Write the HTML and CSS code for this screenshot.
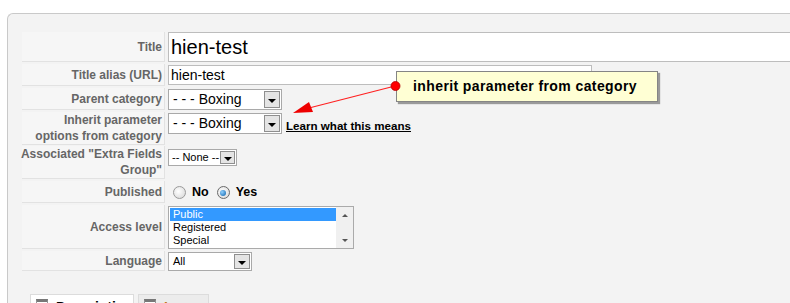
FILE: index.html
```html
<!DOCTYPE html>
<html lang="en">
<head>
  <meta charset="UTF-8" />
  <meta name="viewport" content="width=device-width, initial-scale=1.0" />
  <title>Category - Edit</title>
  <link rel="stylesheet" href="styles.css">
</head>
<body>
  <div class="panel">
    <div class="form">
      <div class="row row-title">
        <div class="label">Title</div>
        <div class="field"><input class="input-title" type="text" value="hien-test"></div>
      </div>

      <div class="row row-alias">
        <div class="label">Title alias (URL)</div>
        <div class="field"><input class="input-alias" type="text" value="hien-test"></div>
      </div>

      <div class="row row-parent">
        <div class="label">Parent category</div>
        <div class="field">
          <div class="select select-cat"><span class="value">- - - Boxing</span><span class="arrow"></span></div>
        </div>
      </div>

      <div class="row row-inherit">
        <div class="label">Inherit parameter<br>options from category</div>
        <div class="field">
          <div class="select select-cat"><span class="value">- - - Boxing</span><span class="arrow"></span></div>
          <a class="help" href="#">Learn what this means</a>
        </div>
      </div>

      <div class="row row-extra">
        <div class="label">Associated "Extra Fields<br>Group"</div>
        <div class="field">
          <div class="select select-small"><span class="value">-- None --</span><span class="arrow"></span></div>
        </div>
      </div>

      <div class="row row-published">
        <div class="label">Published</div>
        <div class="field">
          <label class="radio"><span class="dot"></span>No</label>
          <label class="radio"><span class="dot checked"></span>Yes</label>
        </div>
      </div>

      <div class="row row-access">
        <div class="label">Access level</div>
        <div class="field">
          <div class="listbox">
            <ul>
              <li class="selected">Public</li>
              <li>Registered</li>
              <li>Special</li>
            </ul>
            <div class="scrollbar"><span class="up"></span><span class="down"></span></div>
          </div>
        </div>
      </div>

      <div class="row row-lang">
        <div class="label">Language</div>
        <div class="field">
          <div class="select select-lang"><span class="value">All</span><span class="arrow"></span></div>
        </div>
      </div>
    </div>

    <div class="tabs">
      <div class="tab active"><span class="tab-icon"></span>Description</div>
      <div class="tab"><span class="tab-icon"></span>Image</div>
    </div>
  </div>

  <div class="callout">inherit parameter from category</div>

  <svg class="pointer" width="790" height="303" viewBox="0 0 790 303">
    <line x1="395" y1="86" x2="309" y2="108" stroke="#ff2020" stroke-width="1.2" />
    <polygon points="293,113 309,102 313,112" fill="#ee0000" />
    <circle cx="395.5" cy="86" r="4.5" fill="#ff0000" stroke="#b00000" stroke-width="0.8" />
  </svg>
</body>
</html>
```

FILE: styles.css
```css
body {
  margin: 0;
  background: #fff;
  font-family: "Liberation Sans", Arial, sans-serif;
  overflow: hidden;
  height: 303px;
  position: relative;
}

.panel {
  margin: 13px 0 0 7px;
  height: 320px;
  background: #f3f3f3;
  border: 1px solid #c9c9c9;
  border-right: none;
  border-radius: 6px 0 0 0;
  padding: 18px 0 0 14px;
}

.form {
  display: flex;
  flex-direction: column;
  gap: 2px;
}

.row {
  display: grid;
  grid-template-columns: 143px 1fr;
  column-gap: 3px;
}

.label {
  box-sizing: border-box;
  background: #f6f6f6;
  border-bottom: 1px solid #e2e2e2;
  border-right: 1px solid #e2e2e2;
  padding: 0 2px 0 0;
  display: flex;
  align-items: center;
  justify-content: flex-end;
  text-align: right;
  white-space: nowrap;
  font-size: 12px;
  font-weight: bold;
  line-height: 16px;
  color: #666;
}

.field {
  display: flex;
  align-items: flex-start;
  padding-top: 1px;
}

.row-title { height: 30px; }
.row-alias { height: 22px; }
.row-parent { height: 22px; }
.row-inherit { height: 32px; }
.row-extra { height: 33px; }
.row-published { height: 22px; }
.row-access { height: 44px; }
.row-lang { height: 20px; }

.row-title .field { padding-top: 0; }
.row-extra .field { padding-top: 3px; }
.row-published .field { padding-top: 4px; }
.row-lang .field { padding-top: 1px; }

input {
  box-sizing: border-box;
  border: 1px solid #bdbdbd;
  background: #fff;
  font-family: "Liberation Sans", Arial, sans-serif;
  color: #000;
  margin: 0;
  outline: none;
}

.input-title {
  width: 660px;
  height: 30px;
  font-size: 20px;
  padding: 0 2px;
}

.input-alias {
  width: 424px;
  height: 20px;
  font-size: 14px;
  padding: 0 2px;
}

/* dropdowns */
.select {
  box-sizing: border-box;
  display: flex;
  align-items: stretch;
  background: #fff;
  border: 1px solid #a9a9a9;
  color: #000;
  padding: 1px;
}

.select .value {
  flex: 1;
  padding-left: 3px;
  white-space: nowrap;
  overflow: hidden;
}

.select .arrow {
  box-sizing: border-box;
  width: 16px;
  background: #e4e4e4;
  border: 1px solid #8e8e8e;
  display: flex;
  align-items: center;
  justify-content: center;
}

.select .arrow::after {
  content: "";
  border-top: 4px solid #000;
  border-left: 4px solid transparent;
  border-right: 4px solid transparent;
  margin-top: 2px;
}

.select-cat {
  width: 114px;
  height: 21px;
  font-size: 14px;
  line-height: 17px;
}

.select-small {
  width: 69px;
  height: 17px;
  font-size: 11px;
  line-height: 13px;
}

.select-small .value { padding-left: 2px; }
.select-small .arrow { width: 15px; }

.select-lang {
  width: 84px;
  height: 19px;
  font-size: 11px;
  line-height: 15px;
}

.help {
  margin: 6px 0 0 4px;
  font-size: 11.6px;
  font-weight: bold;
  color: #000;
  text-decoration: underline;
}

/* radios */
.radio {
  display: flex;
  align-items: center;
  font-size: 12.5px;
  font-weight: bold;
  color: #000;
  margin-left: 5px;
  margin-right: 3px;
  line-height: 15px;
}

.dot {
  box-sizing: border-box;
  width: 13px;
  height: 13px;
  border-radius: 50%;
  border: 1px solid #9a9a9a;
  background: radial-gradient(circle at 40% 40%, #fff, #d4d4d4);
  margin-right: 6px;
  display: flex;
  align-items: center;
  justify-content: center;
}

.dot.checked {
  border-color: #6a6a6a;
}

.dot.checked::after {
  content: "";
  width: 6px;
  height: 6px;
  border-radius: 50%;
  background: radial-gradient(circle at 35% 35%, #8fd0ff, #0a5fa8);
}

/* access list */
.listbox {
  box-sizing: border-box;
  width: 186px;
  height: 43px;
  border: 1px solid #aaa;
  background: #fff;
  display: flex;
  padding: 1px 0 0 1px;
}

.listbox ul {
  flex: 1;
  list-style: none;
  margin: 0;
  padding: 0;
  font-size: 11px;
  line-height: 13px;
}

.listbox li {
  padding-left: 3px;
  color: #000;
}

.listbox li.selected {
  background: #3399ff;
  color: #fff;
}

.scrollbar {
  width: 17px;
  margin-top: -1px;
  background: #f0f0f0;
  display: flex;
  flex-direction: column;
  justify-content: space-between;
  align-items: center;
  padding: 7px 0 6px;
  box-sizing: border-box;
}

.scrollbar .up {
  border-bottom: 3px solid #555;
  border-left: 3px solid transparent;
  border-right: 3px solid transparent;
}

.scrollbar .down {
  border-top: 3px solid #555;
  border-left: 3px solid transparent;
  border-right: 3px solid transparent;
}

/* tabs */
.tabs {
  display: flex;
  gap: 4px;
  margin: 23px 0 0 8px;
}

.tab {
  box-sizing: border-box;
  height: 30px;
  border: 1px solid #dcdcdc;
  background: #ececec;
  display: flex;
  align-items: flex-start;
  padding: 4px 0 0 5px;
  font-size: 14px;
  font-weight: bold;
  line-height: 16px;
  color: #c47a1e;
  width: 71px;
}

.tab.active {
  background: #fff;
  color: #000;
  width: 104px;
}

.tab-icon {
  width: 10px;
  height: 10px;
  border: 1px solid #999;
  border-top: 3px solid #777;
  background: #fff;
  margin: 0 8px 0 0;
}

/* callout over the form */
.callout {
  position: absolute;
  left: 396px;
  top: 71px;
  box-sizing: border-box;
  width: 262px;
  height: 31px;
  background: #ffffd4;
  border: 1px solid #858585;
  box-shadow: 2px 2px 1px #9a9a9a;
  padding-left: 16px;
  font-size: 14px;
  font-weight: bold;
  letter-spacing: 0.4px;
  line-height: 29px;
  color: #000;
}

.pointer {
  position: absolute;
  left: 0;
  top: 0;
  pointer-events: none;
}
```
